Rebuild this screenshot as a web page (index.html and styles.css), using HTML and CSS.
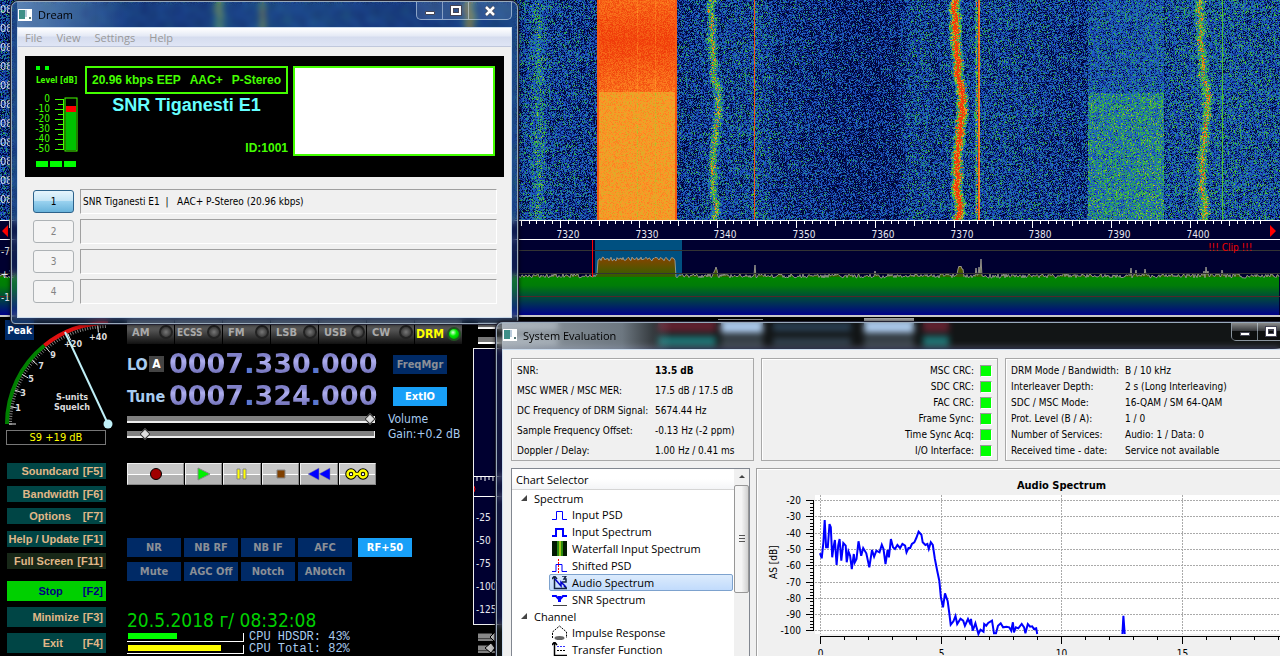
FILE: index.html
```html
<!DOCTYPE html>
<html lang="en">
<head>
    <meta charset="UTF-8">
    <meta name="viewport" content="width=device-width, initial-scale=1.0">
    <title>HDSDR + Dream</title>
    <link rel="stylesheet" href="styles.css">
</head>
<body>
    <main class="sdr">
        <div class="waterfall">
            <canvas id="waterfall"></canvas>
            <div class="times" id="times"></div>
        </div>
        <svg id="scale" class="scale"></svg>
        <svg id="spectrum" class="spectrum"></svg>

        <div class="controls">
            <section class="left">
                <div class="meter">
                    <svg id="meter" class="meter-face"></svg>
                    <button class="peak">Peak</button>
                </div>
                <output class="reading">S9 +19 dB</output>
                <nav class="menu">
                    <button><span>Soundcard</span><span>[F5]</span></button>
                    <button><span>Bandwidth</span><span>[F6]</span></button>
                    <button class="wide"><span>Options</span><span>[F7]</span></button>
                    <button><span>Help / Update</span><span>[F1]</span></button>
                    <button class="dim"><span>Full Screen</span><span>[F11]</span></button>
                </nav>
                <nav class="menu tall">
                    <button class="stop"><span>Stop</span><span>[F2]</span></button>
                    <button><span>Minimize</span><span>[F3]</span></button>
                    <button class="wider"><span>Exit</span><span>[F4]</span></button>
                </nav>
            </section>

            <section class="middle">
                <div class="modes">
                    <button>AM<i></i></button>
                    <button>ECSS<i></i></button>
                    <button>FM<i></i></button>
                    <button>LSB<i></i></button>
                    <button>USB<i></i></button>
                    <button>CW<i></i></button>
                    <button class="on">DRM<i></i></button>
                </div>
                <div class="tuning">
                    <div class="name">LO<button class="lo-a">A</button></div>
                    <div class="digits">0007<b>.</b>330<b>.</b>000</div>
                    <button class="blue">FreqMgr</button>
                    <div class="name">Tune</div>
                    <div class="digits">0007<b>.</b>324<b>.</b>000</div>
                    <button class="blue lit">ExtIO</button>
                </div>
                <div class="sliders">
                    <input type="range" id="volume" min="0" max="100" value="100">
                    <label for="volume">Volume</label>
                    <input type="range" id="gain" min="0" max="100" value="6">
                    <label for="gain">Gain:+0.2 dB</label>
                </div>
                <div class="player">
                    <button aria-label="Record"><svg width="16" height="16"><circle cx="8" cy="8" r="5.500" fill="#a00000" stroke="#000"/></svg></button>
                    <button aria-label="Play"><svg width="16" height="16"><path d="M2 2v12l12-6z" fill="#00f000" stroke="#888"/></svg></button>
                    <button aria-label="Pause"><svg width="16" height="16"><path d="M3 3h3v10H3zM9 3h3v10H9z" fill="#ff0" stroke="#888"/></svg></button>
                    <button aria-label="Stop"><svg width="16" height="16"><path d="M4 4h8v8H4z" fill="#804000" stroke="#888"/></svg></button>
                    <button aria-label="Rewind"><svg width="24" height="16"><path d="M12 2v12L1 8zM23 2v12L12 8z" fill="#00f" stroke="#888" stroke-width=".5"/></svg></button>
                    <button aria-label="Loop"><svg width="24" height="16" fill="none"><path d="M9 8h6" stroke="#000" stroke-width="4"/><g stroke="#000" stroke-width="4.500"><circle cx="6" cy="8" r="3.500"/><circle cx="18" cy="8" r="3.500"/></g><g stroke="#ff0" stroke-width="2.500"><circle cx="6" cy="8" r="3.500"/><circle cx="18" cy="8" r="3.500"/><path d="M9 8h6"/></g></svg></button>
                </div>
                <div class="dsp">
                    <button class="blue">NR</button>
                    <button class="blue">NB RF</button>
                    <button class="blue">NB IF</button>
                    <button class="blue">AFC</button>
                    <button class="blue lit rf">RF+50</button>
                    <button class="blue">Mute</button>
                    <button class="blue">AGC Off</button>
                    <button class="blue">Notch</button>
                    <button class="blue">ANotch</button>
                </div>
                <time class="clock">20.5.2018 г/ 08:32:08</time>
                <div class="cpu">
                    <div class="bar"><div class="fill green" style="width: 43%"></div></div>
                    <span>CPU HDSDR: 43%</span>
                    <div class="bar"><div class="fill yellow" style="width: 82%"></div></div>
                    <span>CPU Total: 82%</span>
                </div>
            </section>

            <section class="right">
                <div class="strip">
                    <span class="line short"></span>
                    <span class="line"></span>
                    <span class="slot a"></span>
                    <span class="slot b"></span>
                    <span class="ghost red"></span>
                    <span class="ghost box"></span>
                    <span class="ghost steel"></span>
                    <span class="ghost box far"></span>
                    <span class="ghost red far"></span>
                </div>
                <svg id="audio" class="audio"></svg>
                <div class="knobs">
                    <svg width="22" height="22"><path d="M5 5h14M5 17h14" stroke="#888" stroke-width="5"/><path d="M5 9h17M5 21h17" stroke="#fff"/><path d="M17 6l5-5v10zM12 17l6-5 4 5-4 5z" fill="#c0c0c0" stroke="#000"/></svg>
                </div>
            </section>
        </div>
    </main>

    <section class="window dream">
        <header class="titlebar">
            <svg class="app-icon" width="14" height="12"><path d="M0 0h14v12H0z" fill="#fff"/><path d="M1 1h6v9H1z" fill="#3f8f88"/><path d="M7 1h2v7H7z" fill="#bcd"/><path d="M11 8h2v2h-2z" fill="#577"/></svg>
            <h1>Dream</h1>
            <div class="caption">
                <button aria-label="Minimize"><svg width="12" height="12"><path d="M1.500 6.500h9v3h-9z" fill="#fff" stroke="#445"/></svg></button>
                <button aria-label="Maximize"><svg width="12" height="12"><path d="M2 2h8v7H2z" fill="none" stroke="#445" stroke-width="4"/><path d="M2 2h8v7H2z" fill="none" stroke="#fff" stroke-width="2"/></svg></button>
                <button class="close" aria-label="Close"><svg width="12" height="12"><path d="M2 2l8 8M10 2l-8 8" stroke="#445" stroke-width="4"/><path d="M2 2l8 8M10 2l-8 8" stroke="#fff" stroke-width="2.500"/></svg></button>
            </div>
        </header>
        <div class="client">
            <nav class="menubar">
                <button disabled>File</button>
                <button disabled>View</button>
                <button disabled>Settings</button>
                <button disabled>Help</button>
            </nav>
            <div class="display">
                <div class="level">
                    <div class="dots"><i></i><i></i></div>
                    <p>Level [dB]</p>
                    <svg id="level" class="level-scale"></svg>
                    <div class="leds"><i></i><i></i><i></i></div>
                </div>
                <div class="station">
                    <p class="rate"><span>20.96 kbps EEP</span><span>AAC+</span><span>P-Stereo</span></p>
                    <p class="label">SNR Tiganesti E1</p>
                    <p class="id">ID:1001</p>
                </div>
                <div class="message"></div>
            </div>
            <ol class="services">
                <li><button class="active">1</button><span>SNR Tiganesti E1 &nbsp;|&nbsp;&nbsp; AAC+ P-Stereo (20.96 kbps)</span></li>
                <li><button disabled>2</button><span></span></li>
                <li><button disabled>3</button><span></span></li>
                <li><button disabled>4</button><span></span></li>
            </ol>
        </div>
    </section>

    <section class="window evaluation">
        <header class="titlebar">
            <svg class="app-icon" width="14" height="12"><path d="M0 0h14v12H0z" fill="#fff"/><path d="M1 1h6v9H1z" fill="#3f8f88"/><path d="M7 1h2v7H7z" fill="#bcd"/><path d="M11 8h2v2h-2z" fill="#577"/></svg>
            <h1>System Evaluation</h1>
            <div class="caption">
                <button aria-label="Minimize"><svg width="12" height="12"><path d="M1.500 6.500h9v3h-9z" fill="#fff" stroke="#445"/></svg></button>
                <button aria-label="Maximize"><svg width="12" height="12"><path d="M2 2h8v7H2z" fill="none" stroke="#445" stroke-width="4"/><path d="M2 2h8v7H2z" fill="none" stroke="#fff" stroke-width="2"/></svg></button>
                <button class="close" aria-label="Close"></button>
            </div>
        </header>
        <div class="client">
            <div class="panels">
                <dl class="panel signal">
                    <dt>SNR:</dt><dd><b>13.5 dB</b></dd>
                    <dt>MSC WMER / MSC MER:</dt><dd>17.5 dB / 17.5 dB</dd>
                    <dt>DC Frequency of DRM Signal:</dt><dd>5674.44 Hz</dd>
                    <dt>Sample Frequency Offset:</dt><dd>-0.13 Hz (-2 ppm)</dd>
                    <dt>Doppler / Delay:</dt><dd>1.00 Hz / 0.41 ms</dd>
                </dl>
                <ul class="panel status">
                    <li>MSC CRC:<i></i></li>
                    <li>SDC CRC:<i></i></li>
                    <li>FAC CRC:<i></i></li>
                    <li>Frame Sync:<i></i></li>
                    <li>Time Sync Acq:<i></i></li>
                    <li>I/O Interface:<i></i></li>
                </ul>
                <dl class="panel mode">
                    <dt>DRM Mode / Bandwidth:</dt><dd>B / 10 kHz</dd>
                    <dt>Interleaver Depth:</dt><dd>2 s (Long Interleaving)</dd>
                    <dt>SDC / MSC Mode:</dt><dd>16-QAM / SM 64-QAM</dd>
                    <dt>Prot. Level (B / A):</dt><dd>1 / 0</dd>
                    <dt>Number of Services:</dt><dd>Audio: 1 / Data: 0</dd>
                    <dt>Received time - date:</dt><dd>Service not available</dd>
                </dl>
            </div>
            <div class="charts">
                <div class="selector">
                    <div class="tree">
                        <h2>Chart Selector</h2>
                        <ul>
                            <li class="group"><svg width="8" height="8"><path d="M7 1v6H1z" fill="#444"/></svg>Spectrum</li>
                            <li><svg width="15" height="14" fill="none" stroke="#00f"><path d="M0 11.500h4.500v-8h6v8H15"/></svg>Input PSD</li>
                            <li><svg width="15" height="14" fill="none" stroke="#00f" stroke-width="2"><path d="M0 11h4V4h7v7h4"/></svg>Input Spectrum</li>
                            <li><svg width="15" height="15"><path d="M0 0h15v15H0z" fill="#021a02"/><path d="M5 0h6v15H5z" fill="#2a8a10"/><path d="M7 0h2v15H7z" fill="#a0c818"/></svg>Waterfall Input Spectrum</li>
                            <li><svg width="15" height="14" fill="none" stroke="#00f"><path d="M0 12.500h4v-7h6v7h5"/><path d="M6.500 0v14" stroke="red" stroke-dasharray="2 1"/></svg>Shifted PSD</li>
                            <li class="selected"><svg width="15" height="14" fill="none" stroke="#124"><path d="M2.500 0v12.500H15M0 3l2.500-3L5 3M12 10l3 2.500M10 0h4l-2 3h2v3h-4" stroke-width="1.500"/><path d="M3 3l6 7V6l5 5" stroke="#00c" stroke-width="1.500"/></svg>Audio Spectrum</li>
                            <li><svg width="15" height="14" fill="none"><path d="M0 3h4l3.500 4L11 3h4" stroke="#00f" stroke-width="2"/><path d="M7.500 3v6" stroke="#00f" stroke-width="3"/><path d="M1 12.500h14" stroke="#444"/></svg>SNR Spectrum</li>
                            <li class="group"><svg width="8" height="8"><path d="M7 1v6H1z" fill="#444"/></svg>Channel</li>
                            <li><svg width="15" height="15" fill="none"><path d="M.5 13V7L4 4l3.500-3L11 4l3.500 3v6" stroke="#000" stroke-dasharray="2 1"/><ellipse cx="7.500" cy="13" rx="5" ry="2" fill="#666"/></svg>Impulse Response</li>
                            <li><svg width="15" height="15" fill="none" stroke="#000"><path d="M2.500 0v13.500H15M0 3l2.500-3L5 3" stroke-width="1.500"/><path d="M5 4.500h9" stroke="#33f" stroke-dasharray="2 1"/><path d="M5 8.500h9" stroke-dasharray="2 1"/></svg>Transfer Function</li>
                        </ul>
                    </div>
                    <div class="scrollbar">
                        <svg width="15" height="16"><path d="M5 9l3-3 3 3z" fill="#444"/></svg>
                        <div class="thumb"></div>
                    </div>
                </div>
                <div class="plot">
                    <h2>Audio Spectrum</h2>
                    <svg id="plot" class="plot-area"></svg>
                </div>
            </div>
        </div>
    </section>

    <script src="app.js"></script>
</body>
</html>
```
FILE: styles.css
```css
* {
    box-sizing: border-box;
}

body {
    margin: 0;
    height: 100vh;
    overflow: hidden;
    position: relative;
    background: #000;
    font-family: "DejaVu Sans Condensed", "DejaVu Sans", sans-serif;
    font-size: 10px;
}

button {
    padding: 0;
    border: none;
    font: inherit;
    white-space: nowrap;
}

h1, h2, p, ul, ol, dl, dd {
    margin: 0;
    padding: 0;
    list-style: none;
}

svg {
    display: block;
    flex: none;
}

/* receiver in the background */

.waterfall {
    position: relative;
    height: 220px;
    overflow: hidden;
}

.waterfall canvas {
    display: block;
    width: 100%;
    height: 220px;
}

.times {
    position: absolute;
    left: 0;
    top: 0;
    color: #dde;
    font-size: 11px;
    line-height: 19px;
    white-space: pre;
}

.scale {
    width: 100%;
    height: 20px;
    background: #000030;
}

.spectrum {
    width: 100%;
    height: 77px;
    background: #000030;
    border-bottom: 2px solid #c8c8c8;
}

.scale text,
.spectrum text,
.audio text {
    font-size: 10px;
    fill: #e8e8f0;
}

.spectrum .clip {
    fill: #f00000;
}

.controls {
    display: flex;
    padding-top: 3px;
}

.left {
    width: 127px;
    flex: none;
}

.meter {
    position: relative;
}

.meter-face {
    width: 127px;
    height: 110px;
}

.meter-face text {
    font-weight: bold;
    font-size: 9px;
    fill: #ddd;
    text-anchor: middle;
}

.peak {
    position: absolute;
    left: 5px;
    top: 0;
    height: 20px;
    width: 29px;
    background: #002a66;
    color: #fff;
    font-weight: bold;
    font-size: 10px;
}

.reading {
    display: block;
    margin-left: 6px;
    width: 100px;
    height: 15px;
    line-height: 14px;
    border: 1px solid #777;
    color: #ff0;
    text-align: center;
    font-size: 11px;
}

.menu {
    display: flex;
    flex-direction: column;
    justify-content: space-between;
    margin: 18px 0 0 7px;
    width: 99px;
    height: 106px;
}

.menu button {
    display: flex;
    justify-content: flex-end;
    align-items: center;
    gap: 4px;
    height: 16px;
    padding-right: 3px;
    background: #004545;
    color: #e0b888;
    font-family: "Liberation Sans", sans-serif;
    font-weight: bold;
    font-size: 11px;
}

.menu .wide {
    gap: 12px;
}

.menu .wider {
    gap: 20px;
}

.menu .dim {
    background: #182818;
}

.menu.tall {
    margin-top: 12px;
    height: 72px;
}

.tall button {
    height: 20px;
}

.menu .stop {
    gap: 20px;
    background: #00d000;
    color: #000080;
}

.middle {
    width: 346px;
    flex: none;
}

.modes {
    display: flex;
    gap: 1px;
}

.modes button {
    display: flex;
    align-items: center;
    justify-content: space-between;
    width: 47px;
    height: 24px;
    padding: 0 1px 0 5px;
    background: linear-gradient(#666, #555 40%, #111);
    color: #aaa;
    font-weight: bold;
    font-size: 11px;
}

.modes button:nth-child(2) {
    padding-left: 2px;
    font-size: 10px;
}

.modes i {
    flex: none;
    width: 14px;
    height: 14px;
    border: 2px solid #222;
    border-radius: 50%;
    background: radial-gradient(#777, #444 60%);
}

.modes .on {
    padding: 4px 1px 0 1px;
    color: #ff0;
    font-size: 12px;
}

.modes .on i {
    border-color: #252;
    background: radial-gradient(circle at 40% 35%, #dfd, #0e0 40%, #080);
}

.tuning {
    display: grid;
    grid-template-columns: 42px 224px 54px;
    grid-auto-rows: 32px;
    align-items: center;
    margin-top: 4px;
}

.name {
    display: flex;
    align-items: center;
    gap: 1px;
    color: #a8ccf0;
    font-size: 16px;
    font-weight: bold;
    white-space: nowrap;
}

.lo-a {
    width: 15px;
    height: 16px;
    background: #444;
    color: #fff;
    font-weight: bold;
    font-size: 12px;
}

.digits {
    background: linear-gradient(#8080c8 25%, #b0b0f0 40%, #7070b8 80%);
    background-clip: text;
    -webkit-background-clip: text;
    color: transparent;
    font-family: "DejaVu Sans", sans-serif;
    font-weight: bold;
    font-size: 27px;
    line-height: 32px;
}

.digits b {
    color: #5878d0;
}

.blue {
    height: 19px;
    background: #002a66;
    color: #8a8f96;
    font-weight: bold;
    font-size: 11px;
}

.lit {
    background: #18a0f8;
    color: #fff;
}

.sliders {
    display: grid;
    grid-template-columns: 248px auto;
    grid-auto-rows: 15px;
    column-gap: 13px;
    align-items: center;
    color: #a8ccf0;
    font-size: 12px;
    line-height: 15px;
}

.sliders input {
    -webkit-appearance: none;
    appearance: none;
    width: 248px;
    height: 7px;
    margin: 0;
    background: #808080;
    border-bottom: 2px solid #eee;
    border-right: 1px solid #eee;
}

.sliders input::-webkit-slider-thumb {
    -webkit-appearance: none;
    width: 8px;
    height: 8px;
    background: #ddd;
    border: 1px solid #333;
    transform: rotate(45deg);
}

.player {
    display: flex;
    gap: 1px;
    margin-top: 21px;
    width: 249px;
}

.player button {
    display: flex;
    flex: 1;
    align-items: center;
    justify-content: center;
    height: 22px;
    border: 1px solid #eee;
    border-bottom-color: #888;
    border-right-color: #888;
    background: linear-gradient(#c8c8c8 50%, #fff 50%, #fff 55%, #b4b4b4 55%);
}

.player button:first-child {
    flex: none;
    width: 57px;
}

.dsp {
    display: grid;
    grid-template-columns: repeat(4, 54px) 57px;
    gap: 5px 3px;
    margin-top: 53px;
}

.rf {
    margin-left: 3px;
}

.clock {
    display: block;
    margin-top: 29px;
    color: #00d000;
    font-size: 19px;
    line-height: 21px;
}

.cpu {
    display: grid;
    grid-template-columns: 117px auto;
    grid-auto-rows: 12px;
    column-gap: 5px;
    align-items: center;
    color: #a8ccf0;
    font-family: "Liberation Mono", monospace;
    font-size: 12px;
    line-height: 12px;
}

.bar {
    height: 9px;
    padding: 0 2px 2px 1px;
    border-bottom: 1px solid #fff;
    border-right: 1px solid #fff;
}

.fill {
    height: 6px;
}

.green {
    background: #0f0;
}

.yellow {
    background: #ff0;
}

.right {
    flex: 1;
    min-width: 0;
}

.strip {
    position: relative;
    height: 28px;
}

.strip span {
    position: absolute;
}

.line {
    left: 391px;
    top: -2px;
    width: 50px;
    height: 3px;
    background: #aaa;
}

.line.short {
    left: 245px;
    top: -1px;
    width: 45px;
    height: 1px;
}

.slot {
    left: 5px;
    width: 80px;
    height: 7px;
    background: #777;
    border-bottom: 2px solid #fff;
}

.slot.a {
    top: 2px;
}

.slot.b {
    top: 17px;
}

.ghost.red {
    left: 185px;
    top: 2px;
    width: 58px;
    height: 10px;
    background: #601020;
    box-shadow: 0 14px #107070;
}

.ghost.box {
    left: 248px;
    top: 2px;
    width: 42px;
    height: 11px;
    background: #b8d8ff;
    box-shadow: 0 14px #303840;
}

.ghost.steel {
    left: 300px;
    top: 4px;
    width: 78px;
    height: 7px;
    background: #203850;
    box-shadow: 0 14px #283848;
}

.ghost.box.far {
    left: 391px;
    width: 50px;
}

.ghost.red.far {
    left: 450px;
    width: 26px;
}

.audio {
    width: 100%;
    height: 277px;
    border: 1px solid #eee;
    border-right: none;
    background: #000030;
}

.knobs {
    margin-top: 6px;
}

/* window frames */

.window {
    position: absolute;
    display: flex;
    flex-direction: column;
    padding: 0 5px 5px;
    border: 1px solid #9ab;
    border-radius: 7px 7px 4px 4px;
    box-shadow: 0 0 0 1px #223, 0 0 5px #000;
    backdrop-filter: blur(3px);
}

.dream {
    left: 11px;
    top: 1px;
    width: 507px;
    background: rgba(40, 80, 140, .35);
}

.evaluation {
    left: 496px;
    top: 322px;
    right: -53px;
    bottom: 0;
    padding-bottom: 0;
    border-bottom: none;
    border-radius: 7px 7px 0 0;
    background: rgba(120, 140, 150, .15);
}

.titlebar {
    display: flex;
    align-items: center;
    height: 25px;
}

.dream .titlebar {
    background: linear-gradient(90deg, rgba(130, 165, 205, .6), transparent 110px);
}

.evaluation .titlebar {
    height: 26px;
    padding-bottom: 2px;
    background: linear-gradient(90deg, rgba(190, 200, 210, .75), rgba(170, 185, 200, .6) 120px, transparent 170px);
}

.titlebar h1 {
    margin-left: 6px;
    font-family: "Open Sans", sans-serif;
    font-size: 11px;
    font-weight: normal;
}

.caption {
    display: flex;
    align-self: flex-start;
    margin-left: auto;
    border: 1px solid rgba(220, 235, 250, .6);
    border-top: none;
    border-radius: 0 0 5px 5px;
}

.caption button {
    display: flex;
    align-items: center;
    justify-content: center;
    width: 26px;
    height: 17px;
    background: rgba(180, 200, 230, .15);
    border-right: 1px solid rgba(220, 235, 250, .5);
}

.caption .close {
    width: 42px;
    border-right: none;
}

.evaluation .caption button {
    background: linear-gradient(rgba(255, 255, 255, .5), rgba(120, 120, 130, .3) 50%, rgba(0, 0, 0, .3) 50%);
}

.app-icon {
    margin-left: 1px;
}

.client {
    flex: 1;
    border: 1px solid #cde;
    background: #f0f0f0;
    min-width: 0;
    min-height: 0;
}

/* Dream */

.menubar {
    display: flex;
    height: 19px;
    padding-left: 7px;
    gap: 14px;
    background: linear-gradient(#fff, #e4e9f5 45%, #d5dcee 50%, #dfe5f5);
    border-bottom: 1px solid #c0c8dc;
}

.menubar button {
    background: none;
    color: #999;
    font-family: "Open Sans", sans-serif;
    font-size: 11px;
}

.display {
    display: flex;
    margin: 9px 7px 0;
    height: 121px;
    padding: 10px 9px 0 11px;
    background: #000;
    color: #4f0;
}

.level {
    width: 49px;
}

.level p {
    margin-top: 4px;
    font-weight: bold;
    font-size: 8px;
    line-height: 14px;
    white-space: nowrap;
}

.dots {
    display: flex;
    gap: 5px;
}

.dots i {
    width: 4px;
    height: 4px;
    background: #0f0;
}

.level-scale {
    width: 48px;
    height: 62px;
    margin-top: 6px;
    overflow: visible;
}

.level-scale text {
    fill: #4f0;
    font-size: 10px;
    text-anchor: end;
}

.leds {
    display: flex;
    gap: 2px;
    margin-top: 5px;
}

.leds i {
    width: 12px;
    height: 6px;
    background: #0f0;
}

.station {
    flex: 1;
    display: flex;
    flex-direction: column;
    font-family: "Liberation Sans", sans-serif;
    font-weight: bold;
    height: 90px;
}

.rate {
    display: flex;
    justify-content: space-between;
    height: 28px;
    padding: 0 5px;
    border: 2px solid #4f0;
    font-size: 12px;
    line-height: 25px;
    white-space: nowrap;
}

.label {
    padding-top: 1px;
    color: #6ff;
    font-size: 18px;
    line-height: 21px;
    text-align: center;
}

.id {
    margin-top: auto;
    font-size: 12px;
    line-height: 16px;
    text-align: right;
}

.message {
    width: 202px;
    height: 90px;
    margin-left: 5px;
    border: 2px solid #4f0;
    background: #fff;
}

.services {
    display: flex;
    flex-direction: column;
    gap: 5px;
    padding: 12px 14px 13px 15px;
}

.services li {
    display: flex;
    align-items: center;
    gap: 6px;
}

.services button {
    width: 41px;
    height: 23px;
    border: 1px solid #adb2b5;
    border-radius: 3px;
    background: #f4f4f4;
    color: #838383;
}

.services .active {
    border-color: #2c628b;
    background: linear-gradient(#e5f4fc, #c4e5f6 45%, #98d1ef 50%, #68b3db);
    color: #000;
}

.services span {
    flex: 1;
    height: 25px;
    padding-left: 2px;
    border: 1px solid #a0a0a0;
    border-right-color: #fff;
    border-bottom-color: #fff;
    line-height: 23px;
}

/* System Evaluation */

.evaluation .client {
    display: flex;
    flex-direction: column;
    padding: 8px 8px 0;
    border-bottom: none;
}

.panels {
    display: flex;
    gap: 7px;
}

.panel {
    border: 1px solid #a8a8a8;
    box-shadow: inset 1px 1px #fff;
    white-space: nowrap;
}

.signal,
.mode {
    display: grid;
    align-content: start;
    padding: 2px 5px 0;
}

.signal {
    grid-template-columns: 138px auto;
    width: 243px;
    height: 103px;
    line-height: 20px;
}

.status {
    width: 237px;
    padding: 4px 5px 0;
    line-height: 16px;
}

.status li {
    display: flex;
    justify-content: flex-end;
    align-items: center;
    gap: 6px;
}

.status i {
    width: 12px;
    height: 12px;
    border: 1px solid #999;
    border-right-color: #fff;
    border-bottom-color: #fff;
    background: #0f0;
}

.mode {
    flex: 1;
    grid-template-columns: 114px auto;
    padding-top: 4px;
    line-height: 16px;
}

.charts {
    display: flex;
    flex: 1;
    gap: 6px;
    min-height: 0;
    margin-top: 7px;
    overflow: hidden;
}

.selector {
    display: flex;
    width: 239px;
    flex: none;
    border: 1px solid #828790;
    border-bottom: none;
    background: #fff;
    font-family: "Open Sans", sans-serif;
    font-size: 11px;
}

.tree {
    flex: 1;
}

.tree h2 {
    height: 21px;
    padding-left: 4px;
    border-bottom: 1px solid #d5d5d5;
    background: linear-gradient(#fff 50%, #f4f5f7);
    font-size: 11px;
    font-weight: normal;
    line-height: 21px;
}

.tree ul {
    padding: 0 1px 0 37px;
}

.tree li {
    display: flex;
    align-items: center;
    gap: 5px;
    height: 17px;
    padding-left: 2px;
    border: 1px solid transparent;
    border-radius: 2px;
    white-space: nowrap;
}

.tree .group {
    height: 16px;
    margin-left: -32px;
    gap: 6px;
}

.tree .selected {
    border-color: #7da2ce;
    background: linear-gradient(#dcebfc, #c1dbfc);
}

.scrollbar {
    width: 15px;
    background: #f0f0f0;
}

.thumb {
    height: 108px;
    border: 1px solid #979797;
    border-radius: 2px;
    background: repeating-linear-gradient(#555 0, #555 1px, transparent 1px, transparent 3px) center / 6px 8px no-repeat, linear-gradient(90deg, #f5f5f5 50%, #d0d0d0);
}

.plot {
    flex: 1;
    display: flex;
    flex-direction: column;
    min-width: 0;
    border: 1px solid #a0a0a0;
    border-bottom: none;
    box-shadow: inset 1px 1px #fff;
}

.plot h2 {
    height: 26px;
    padding-top: 9px;
    padding-left: 49px;
    font-size: 11px;
    line-height: 16px;
    text-align: center;
}

.plot-area {
    width: 100%;
    height: 160px;
}

.plot-area text {
    font-size: 10px;
}
```
FILE: app.js
```js
const SVG = 'http://www.w3.org/2000/svg';
const PX_PER_KHZ = 7.87;
const KHZ_7320 = 560;

let seed = 7;
function random() {
    seed = (seed * 1103515245 + 12345) % 2147483648;
    return seed / 2147483648;
}

function add(parent, tag, attrs, text) {
    const el = document.createElementNS(SVG, tag);
    for (const key in attrs) {
        el.setAttribute(key, attrs[key]);
    }
    if (text !== undefined) el.textContent = text;
    parent.appendChild(el);
    return el;
}

// palette: navy, blue, green, yellow, orange, red
const stops = [
    [0, 0, 0, 40], [0.2, 2, 10, 70], [0.4, 30, 80, 195], [0.5, 35, 105, 200], [0.58, 30, 140, 130],
    [0.66, 50, 180, 60], [0.8, 110, 200, 50], [0.86, 210, 180, 40], [0.9, 255, 150, 40], [1, 240, 60, 10]
];

function palette(v) {
    v = Math.max(0, Math.min(1, v));
    for (let i = 1; i < stops.length; i++) {
        if (v <= stops[i][0]) {
            const a = stops[i - 1], b = stops[i];
            const t = (v - a[0]) / (b[0] - a[0]);
            return [1, 2, 3].map(k => a[k] + (b[k] - a[k]) * t);
        }
    }
    return [240, 60, 10];
}

function drawWaterfall() {
    const canvas = document.getElementById('waterfall');
    const w = canvas.width = canvas.clientWidth;
    const h = canvas.height = 220;
    const ctx = canvas.getContext('2d');
    const img = ctx.createImageData(w, h);
    // centre, half width, strength, follows the drift
    const carriers = [
        [222, 6, 0.5, 1], [262, 3, 0.6, 0], [472, 6, 0.7, 1], [538, 9, 0.16, 0],
        [714, 5, 0.42, 1], [755, 5, 0.08, 0], [958, 6, 0.85, 1], [976, 1, 0.35, 0],
        [1203, 5, 0.42, 1]
    ];
    // steady narrow lines: x and level
    const lines = { 754: 0.98, 978: 0.98, 979: 0.92, 1222: 0.72 };
    let drift = 0;
    for (let y = 0; y < h; y++) {
        drift = drift * 0.93 + (random() - 0.5) * 1.6;
        const wobble = drift + 2 * Math.sin(y / 26 + 4) + y / 70 - 1;
        const fade = random() * 0.05;
        for (let x = 0; x < w; x++) {
            let v = 0.31 + 0.03 * Math.sin(x / 37) + fade + (random() + random() - 1) * 0.4;
            if (x > 770 && x < 900) v -= 0.04;
            if (x > 905 && x < 930) v += 0.04;
            if (x > 1087 && x < 1164) v = v * 0.8 + (y > 92 ? 0.3 : 0.17);
            if (x > 1164) v += 0.05;
            for (const c of carriers) {
                const d = Math.abs(x - c[0] - Math.round(wobble * c[3]));
                if (d <= c[1]) v += c[2] * (1 - d / (c[1] + 1));
            }
            if (lines[x]) v = lines[x] + (random() - 0.5) * 0.08;
            if (x >= 597 && x < 677) {
                v = (y < 92 ? 0.99 - Math.abs(y - 40) / 1100 : 0.895) + (random() - 0.5) * 0.06;
                if (x < 599 || x > 674) v = 0.97;
                if (x === 637 || x === 655) v -= 0.03;
            }
            const rgb = palette(v);
            const i = (y * w + x) * 4;
            img.data[i] = rgb[0];
            img.data[i + 1] = rgb[1];
            img.data[i + 2] = rgb[2];
            img.data[i + 3] = 255;
        }
    }
    ctx.putImageData(img, 0, 0);
    document.getElementById('times').textContent = Array(11).fill('08').join('\n');
}

function drawScale() {
    const svg = document.getElementById('scale');
    const w = svg.clientWidth;
    let ticks = '';
    for (let k = -70; k < 92; k++) {
        const x = Math.round(KHZ_7320 + k * PX_PER_KHZ) + 0.5;
        if (x > w - 12) break;
        ticks += `M${x} 1v${k % 10 === 0 ? 7 : k % 5 === 0 ? 5 : 3}`;
        if (k % 10 === 0 && k >= 0) add(svg, 'text', { x: x - 4, y: 18 }, 7320 + k);
    }
    add(svg, 'path', { d: ticks + `M0 .5H${w}M0 19.5H${w}`, stroke: '#fff' });
    add(svg, 'path', { d: `M8 5v12l-6-6zM${w - 10} 5v12l6-6z`, fill: '#f00' });
}

function drawSpectrum() {
    const svg = document.getElementById('spectrum');
    const w = svg.clientWidth;
    const defs = add(svg, 'defs', {});
    const grad = add(defs, 'linearGradient', { id: 'floor', gradientUnits: 'userSpaceOnUse', x1: 0, x2: 0, y1: 16, y2: 75 });
    [[0, '#904000'], [0.35, '#306000'], [0.36, '#008400'], [0.5, '#007c08'], [1, '#000088']].forEach(s => {
        add(grad, 'stop', { offset: s[0], 'stop-color': s[1] });
    });
    add(svg, 'rect', { x: 595, y: 0, width: 87, height: 75, fill: '#005080' });
    const peaks = { 714: 4, 715: 6, 716: 9, 717: 6, 755: 11, 875: 5, 958: 7, 959: 10, 960: 9, 961: 10, 962: 7, 963: 7, 976: 8, 979: 9, 981: 17, 1131: 8, 1136: 6, 1145: 7, 1204: 5, 1206: 9, 1208: 5, 1222: 6 };
    let d = '';
    for (let x = 0; x < w; x++) {
        let y = 34 + random() * 4 - (random() > 0.85 ? 1 : 0);
        if (x > 597 && x < 676) y = 17 + random() * 4;
        if (peaks[x]) y = 36 - peaks[x];
        d += `${x ? 'L' : 'M'}${x} ${y.toFixed(1)}`;
    }
    add(svg, 'path', { d: d + `V75H0z`, fill: 'url(#floor)' });
    add(svg, 'path', { d: d, fill: 'none', stroke: '#a8a8a0', 'stroke-width': 0.8 });
    add(svg, 'path', { d: `M0 10.5H${w}M0 33.5H${w}`, stroke: '#333' });
    add(svg, 'path', { d: `M0 56.5H${w}`, stroke: '#502828' });
    add(svg, 'path', { d: 'M592.5 0v37', stroke: '#f00' });
    [['-7', 15], ['+1', 38], ['-1', 61]].forEach(t => add(svg, 'text', { x: 1, y: t[1] }, t[0]));
    add(svg, 'text', { x: w - 72, y: 11, class: 'clip' }, '!!! Clip !!!');
}

function drawMeter() {
    const svg = document.getElementById('meter');
    const cx = 108, cy = 104, r = 101;
    const at = (deg, rad) => [cx - rad * Math.cos(deg * Math.PI / 180), cy - rad * Math.sin(deg * Math.PI / 180)].map(n => n.toFixed(1)).join(' ');
    add(svg, 'path', { d: `M${at(0, r)}A${r} ${r} 0 0 1 ${at(51, r)}`, stroke: '#008000', 'stroke-width': 4, fill: 'none' });
    add(svg, 'path', { d: `M${at(51, r)}A${r} ${r} 0 0 1 ${at(90, r)}`, stroke: '#e01010', 'stroke-width': 4, fill: 'none' });
    let small = '', big = '';
    for (let a = 0; a < 90; a += 1.5) small += `M${at(a, 99)}L${at(a, 96)}`;
    for (const a of [0, 10, 20, 30, 40, 51, 66, 84]) big += `M${at(a, 99)}L${at(a, 92)}`;
    add(svg, 'path', { d: small, stroke: '#bbb', 'stroke-width': 0.7 });
    add(svg, 'path', { d: big, stroke: '#ddd' });
    [[18, 91, '1'], [23, 76, '3'], [31, 62, '5'], [41, 49, '7'], [53, 38, '9'], [73, 27, '+20'], [98, 20, '+40'], [72, 80, 'S-units'], [72, 90, 'Squelch']]
        .forEach(t => add(svg, 'text', { x: t[0], y: t[1] }, t[2]));
    add(svg, 'path', { d: `M${cx} ${cy}L65 12`, stroke: '#c0f0f8', 'stroke-width': 2 });
    add(svg, 'circle', { cx: cx, cy: cy, r: 4.5, fill: '#c0f0f8' });
}

function drawLevel() {
    const svg = document.getElementById('level');
    let ticks = 'M27.5 5V56';
    for (let i = 0; i <= 10; i++) ticks += `M${i % 2 ? 22 : 19} ${5.5 + i * 5}H27`;
    add(svg, 'path', { d: ticks, stroke: '#4f0', fill: 'none' });
    for (let i = 0; i < 6; i++) add(svg, 'text', { x: 14, y: 8 + i * 10 }, i ? -10 * i : '0');
    add(svg, 'rect', { x: 29, y: 4, width: 12, height: 53, fill: '#000', stroke: '#4f0' });
    add(svg, 'rect', { x: 30, y: 12, width: 10, height: 6, fill: '#f00' });
    add(svg, 'rect', { x: 30, y: 18, width: 10, height: 38, fill: '#00c000' });
}

function drawAudioStrip() {
    const svg = document.getElementById('audio');
    add(svg, 'path', { d: 'M0 127.500H60M0 147.500H60M3 128v4M7 128v3M11 128v4M15 128v3M19 128v4M22 128v6', stroke: '#fff' });
    add(svg, 'path', { d: 'M0 137q2 3 0 6', stroke: '#f00', fill: 'none' });
    [-25, -50, -75, -100, -125].forEach((v, i) => add(svg, 'text', { x: 2, y: 172 + i * 23 }, v));
}

const audio = [
    208, 268, 213, 283, 218, 235, 222, 168, 226, 250, 231, 250, 236, 180, 240, 190, 244, 280, 248, 250, 252, 228, 257, 303,
    262, 245, 266, 225, 271, 290, 277, 237, 284, 245, 287, 295, 292, 262, 297, 275, 302, 315, 308, 270, 311, 295, 316, 285,
    322, 232, 330, 275, 336, 252, 345, 268, 354, 310, 362, 258, 368, 278, 375, 260, 384, 265, 391, 242, 396, 255, 402, 300,
    408, 258, 412, 280, 418, 225, 424, 250, 430, 255, 437, 243, 445, 252, 452, 240, 460, 245, 464, 265, 470, 252, 475, 252,
    480, 240, 487, 235, 493, 222, 500, 203, 508, 212, 512, 235, 520, 243, 526, 240, 530, 255, 536, 235, 542, 243, 548, 285,
    555, 320, 561, 350, 566, 400, 572, 430, 578, 388, 586, 412, 591, 450, 595, 482, 603, 472, 609, 456, 614, 480, 624, 464,
    632, 470, 637, 485, 646, 465, 652, 478, 655, 465, 660, 500, 668, 478, 677, 510, 683, 497, 692, 503, 694, 480, 700, 485,
    706, 477, 717, 470, 723, 508, 729, 508, 735, 485, 743, 478, 750, 490, 760, 488, 768, 490, 774, 500, 779, 475, 782, 505,
    788, 490, 795, 493, 805, 480, 812, 490, 816, 508, 823, 480, 830, 488, 836, 487, 841, 495, 848, 493, 851, 510
];
const spur = [1103, 510, 1106, 455, 1110, 510];

function drawPlot() {
    const svg = document.getElementById('plot');
    const w = svg.clientWidth;
    const left = 63, step = 24.1;
    add(svg, 'rect', { x: 58, y: 0, width: w, height: 139, fill: '#fff' });
    let grid = '', axis = 'M56.5 5V136M63 141.5H' + w;
    for (let i = 0; i <= 8; i++) {
        const y = Math.round(5 + i * 16.3) + 0.5;
        grid += `M58 ${y}H${w}`;
        axis += `M49 ${y}h7`;
        add(svg, 'text', { x: 44, y: y + 3, 'text-anchor': 'end' }, -20 - i * 10);
        if (i === 8) break;
        for (let j = 1; j < 5; j++) axis += `M53 ${y + Math.round(j * 3.3)}h4`;
    }
    for (let k = 0; left + k * step < w; k++) {
        const x = Math.round(left + k * step) + 0.5;
        axis += `M${x} 141v${k % 5 ? 4 : 8}`;
        if (k % 5) continue;
        grid += `M${x} 0V139`;
        add(svg, 'text', { x: x, y: 162, 'text-anchor': 'middle' }, k);
    }
    add(svg, 'path', { d: grid, stroke: '#aaa', 'stroke-dasharray': '2 1' });
    add(svg, 'path', { d: axis, stroke: '#000' });
    add(svg, 'text', { x: -84, y: 20, transform: 'rotate(-90)' }, 'AS [dB]');
    for (const list of [audio, spur]) {
        const points = [];
        for (let i = 0; i < list.length; i += 2) {
            points.push((left + (list[i] - 208) / 2.96).toFixed(1) + ',' + ((list[i + 1] - 93) / 3).toFixed(1));
        }
        add(svg, 'polyline', { points: points.join(' '), fill: 'none', stroke: '#00f', 'stroke-width': 2 });
    }
}

drawWaterfall();
drawScale();
drawSpectrum();
drawMeter();
drawLevel();
drawAudioStrip();
drawPlot();
```
